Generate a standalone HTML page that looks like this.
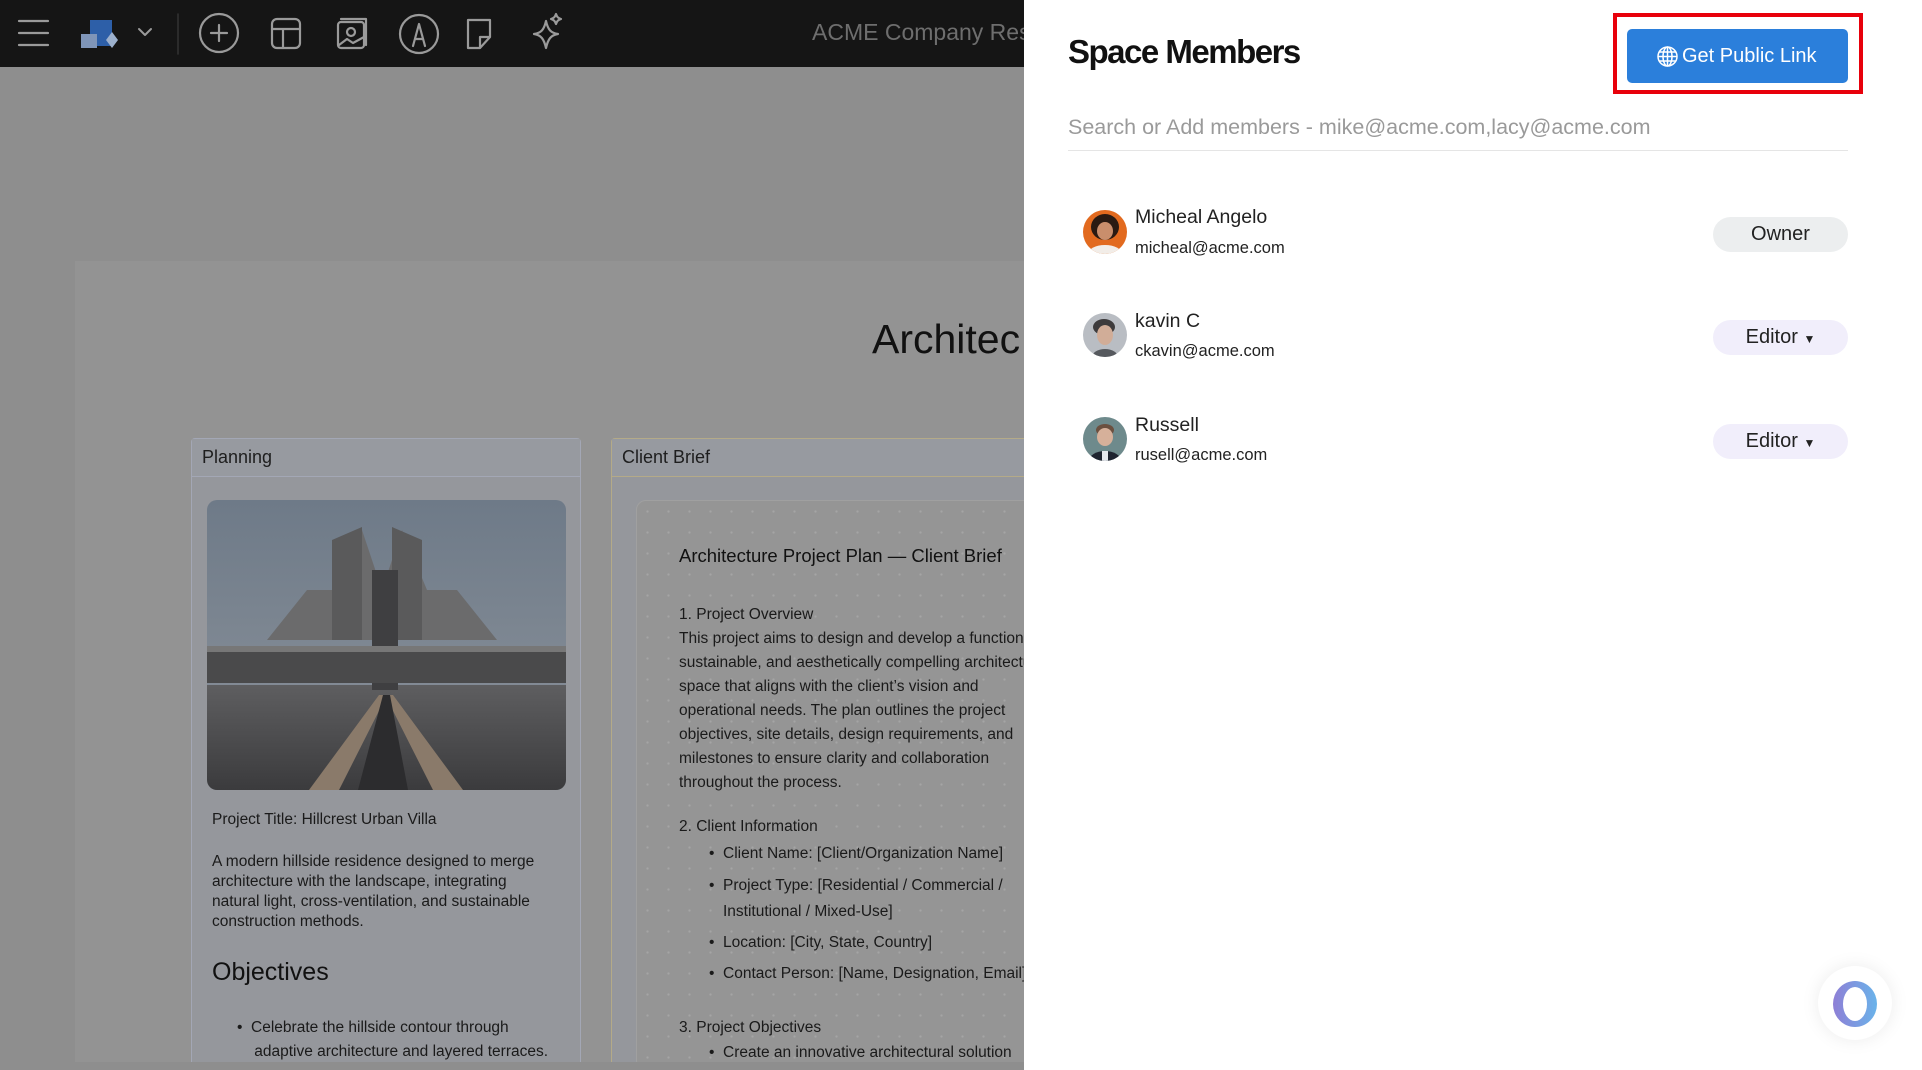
<!DOCTYPE html>
<html><head><meta charset="utf-8"><style>
*{margin:0;padding:0;box-sizing:border-box}
body{width:1922px;height:1070px;overflow:hidden;position:relative;background:#8e8e8e;font-family:"Liberation Sans",sans-serif}
.abs{position:absolute}
.top{left:0;top:0;width:1024px;height:67px;background:#151515}
.page{left:75px;top:261px;width:949px;height:801px;background:#939393}
.card{background:#95979c;border:1px solid #a3a7b5;border-radius:4px 4px 0 0}
.hdr{height:38px;border-bottom:1px solid #a3a7b5;padding:8px 10px;font-size:18px;color:#1e1e1e;background:#979aa0}
.t{color:#1a1a1a;font-size:15.5px;white-space:nowrap}
.panel{left:1024px;top:0;width:898px;height:1070px;background:#fff}
.name{font-size:19.5px;color:#222}
.mail{font-size:16.5px;color:#222}
.pill{width:135px;height:35px;border-radius:18px;font-size:20px;color:#222;text-align:center;line-height:35px}
.av{width:44px;height:44px;border-radius:50%;overflow:hidden}
</style></head><body>
<div class="abs top">
 <svg class="abs" style="left:0;top:0" width="1024" height="67" fill="none" stroke="#9a9a9a" stroke-width="2.2" stroke-linecap="round" stroke-linejoin="round">
  <path d="M19 21h29M19 33h29M19 45h29"/>
  <rect x="90" y="20" width="22" height="26" fill="#2d5fa8" stroke="none"/>
  <rect x="81" y="34" width="16" height="14" fill="#7f95b8" stroke="none"/>
  <path d="M112 32l6 8-6 8-6-8z" fill="#9cb0cc" stroke="none"/>
  <path d="M139 29l6 6 6-6" stroke-width="2"/>
  <path d="M178 14v40" stroke="#333" stroke-width="1.5"/>
  <circle cx="219" cy="33" r="19"/><path d="M219 25v16M211 33h16"/>
  <rect x="272" y="19" width="28" height="29" rx="5"/><path d="M272 29h28M283 29v19"/>
  <rect x="338" y="22" width="26" height="26" rx="3"/><path d="M341 19h25v26"/><circle cx="351" cy="32" r="4"/><path d="M339 45l8-6 6 4 11-6"/>
  <circle cx="419" cy="34" r="19"/><path d="M413 46l6-22 6 22M415 39h8"/>
  <path d="M468 20h22v17l-10 11h-12zM490 37h-10v11"/>
  <path d="M546 21c2 9 5 12 12 13-7 1-10 5-12 14-2-9-5-13-12-14 7-1 10-4 12-13zM556 14c1 3 2 4 5 5-3 1-4 2-5 5-1-3-2-4-5-5 3-1 4-2 5-5z"/>
 </svg>
 <div class="abs" style="left:812px;top:19px;font-size:23px;color:#6e6e6e;white-space:nowrap">ACME Company Res</div>
</div>
<div class="abs page"></div>
<div class="abs" style="left:872px;top:316px;font-size:41px;color:#111;white-space:nowrap">Architec</div>

<div class="abs card" style="left:191px;top:438px;width:390px;height:632px">
 <div class="hdr">Planning</div>
</div>
<svg class="abs" style="left:207px;top:500px" width="359" height="290">
 <defs><clipPath id="c"><rect width="359" height="290" rx="10"/></clipPath>
 <linearGradient id="sky" x1="0" y1="0" x2="0" y2="1"><stop offset="0" stop-color="#6e7a88"/><stop offset="1" stop-color="#8d949c"/></linearGradient>
 <linearGradient id="gr" x1="0" y1="0" x2="0" y2="1"><stop offset="0" stop-color="#5e5e60"/><stop offset="1" stop-color="#3b3b3d"/></linearGradient></defs>
 <g clip-path="url(#c)">
 <rect width="359" height="290" fill="url(#sky)"/>
 <rect y="185" width="359" height="105" fill="url(#gr)"/>
 <path d="M60 140l40-50h30l25-60 20 60 20-60 25 60h30l40 50z" fill="#6b6b6c"/>
 <path d="M125 140v-100l30-13v113zM215 140v-100l-30-13v113z" fill="#5a5a5b"/>
 <rect x="165" y="70" width="26" height="120" fill="#3f3f41"/>
 <rect x="0" y="148" width="359" height="35" fill="#4a4a4b"/>
 <rect x="0" y="146" width="359" height="6" fill="#777"/>
 <path d="M172 195l-70 95h30l48-95zM186 195l70 95h-30l-48-95z" fill="#8a7a6a"/>
 <path d="M176 195l-25 95h50l-18-95z" fill="#2c2c2e"/>
 </g>
</svg>
<div class="abs t" style="left:212px;top:811px">Project Title: Hillcrest Urban Villa</div>
<div class="abs t" style="left:212px;top:852px;line-height:20px">A modern hillside residence designed to merge<br>architecture with the landscape, integrating<br>natural light, cross-ventilation, and sustainable<br>construction methods.</div>
<div class="abs" style="left:212px;top:958px;font-size:25px;color:#111">Objectives</div>
<div class="abs t" style="left:237px;top:1016px;line-height:24px">•&nbsp;&nbsp;Celebrate the hillside contour through<br>&nbsp;&nbsp;&nbsp;&nbsp;adaptive architecture and layered terraces.</div>

<div class="abs card" style="left:611px;top:438px;width:430px;height:632px;border-color:#b4aa88">
 <div class="hdr" style="border-color:#b4aa88">Client Brief</div>
</div>
<div class="abs" style="left:636px;top:500px;width:400px;height:570px;border:1px solid #a0a0a0;border-radius:10px;background-color:#959595;background-image:radial-gradient(#a5a5a5 1px,transparent 1.3px);background-size:21px 21px"></div>
<div class="abs" style="left:679px;top:545px;font-size:18.5px;color:#111;white-space:nowrap">Architecture Project Plan — Client Brief</div>
<div class="abs t" style="left:679px;top:603px;line-height:24px">1. Project Overview<br>This project aims to design and develop a functional,<br>sustainable, and aesthetically compelling architectural<br>space that aligns with the client’s vision and<br>operational needs. The plan outlines the project<br>objectives, site details, design requirements, and<br>milestones to ensure clarity and collaboration<br>throughout the process.</div>
<div class="abs t" style="left:679px;top:818px">2. Client Information</div>
<div class="abs t" style="left:709px;top:845px">•&nbsp;&nbsp;Client Name: [Client/Organization Name]</div>
<div class="abs t" style="left:709px;top:877px">•&nbsp;&nbsp;Project Type: [Residential / Commercial /</div>
<div class="abs t" style="left:723px;top:903px">Institutional / Mixed-Use]</div>
<div class="abs t" style="left:709px;top:934px">•&nbsp;&nbsp;Location: [City, State, Country]</div>
<div class="abs t" style="left:709px;top:965px">•&nbsp;&nbsp;Contact Person: [Name, Designation, Email]</div>
<div class="abs t" style="left:679px;top:1019px">3. Project Objectives</div>
<div class="abs t" style="left:709px;top:1044px">•&nbsp;&nbsp;Create an innovative architectural solution</div>
<div class="abs" style="left:0;top:1062px;width:1024px;height:8px;background:#8e8e8e"></div>

<div class="abs panel"></div>
<div class="abs" style="left:1068px;top:33px;font-size:33px;font-weight:bold;color:#111;letter-spacing:-1.5px">Space Members</div>
<div class="abs" style="left:1613px;top:13px;width:250px;height:81px;border:4px solid #e8000b"></div>
<div class="abs" style="left:1627px;top:29px;width:221px;height:54px;background:#2b7fdb;border-radius:5px;color:#fff;font-size:20px;line-height:54px;padding-left:29px;white-space:nowrap">
 <svg style="position:absolute;left:30px;top:17px" width="21" height="21" fill="none" stroke="#fff" stroke-width="1.5"><circle cx="10.5" cy="10.5" r="9.5"/><ellipse cx="10.5" cy="10.5" rx="4.5" ry="9.5"/><path d="M1 10.5h19M2.5 6h16M2.5 15h16M10.5 1v19"/></svg>
 <span style="margin-left:26px">Get Public Link</span></div>
<div class="abs" style="left:1068px;top:115px;font-size:21.5px;color:#9a9a9a;white-space:nowrap">Search or Add members - mike@acme.com,lacy@acme.com</div>
<div class="abs" style="left:1068px;top:150px;width:780px;height:1px;background:#e5e5e5"></div>

<svg class="abs av" style="left:1083px;top:210px" width="44" height="44"><rect width="44" height="44" fill="#e26a1f"/><ellipse cx="22" cy="17" rx="14" ry="13" fill="#2a1a12"/><ellipse cx="22" cy="21" rx="8" ry="9" fill="#c98e6c"/><ellipse cx="22" cy="44" rx="17" ry="9" fill="#f2ede8"/></svg>
<div class="abs name" style="left:1135px;top:206px">Micheal Angelo</div>
<div class="abs mail" style="left:1135px;top:239px">micheal@acme.com</div>
<div class="abs pill" style="left:1713px;top:217px;background:#eceeef">Owner</div>

<svg class="abs av" style="left:1083px;top:313px" width="44" height="44"><rect width="44" height="44" fill="#b9bdc3"/><ellipse cx="21" cy="14" rx="11" ry="8" fill="#3d3b3c"/><ellipse cx="22" cy="22" rx="8" ry="10" fill="#d1ad98"/><ellipse cx="22" cy="44" rx="13" ry="8" fill="#56595e"/></svg>
<div class="abs name" style="left:1135px;top:310px">kavin C</div>
<div class="abs mail" style="left:1135px;top:342px">ckavin@acme.com</div>
<div class="abs pill" style="left:1713px;top:320px;background:#f1eefb">Editor <span style="font-size:12px">▼</span></div>

<svg class="abs av" style="left:1083px;top:417px" width="44" height="44"><rect width="44" height="44" fill="#6e8a8c"/><ellipse cx="22" cy="13" rx="9" ry="6" fill="#6b5040"/><ellipse cx="22" cy="20" rx="8" ry="9" fill="#d6b09a"/><ellipse cx="22" cy="44" rx="16" ry="10" fill="#1f2430"/><rect x="19" y="34" width="6" height="10" fill="#e6e9ee"/></svg>
<div class="abs name" style="left:1135px;top:414px">Russell</div>
<div class="abs mail" style="left:1135px;top:446px">rusell@acme.com</div>
<div class="abs pill" style="left:1713px;top:424px;background:#f1eefb">Editor <span style="font-size:12px">▼</span></div>

<div class="abs" style="left:1818px;top:966px;width:74px;height:74px;border-radius:50%;background:#fff;box-shadow:0 0 18px rgba(0,0,0,.08)"></div>
<div class="abs" style="left:1833px;top:981px;width:44px;height:46px;border-radius:50%;background:linear-gradient(90deg,#8e7fd6,#6ab3ea)"></div>
<div class="abs" style="left:1843px;top:987px;width:24px;height:34px;border-radius:50%;background:#fff"></div>
</body></html>
